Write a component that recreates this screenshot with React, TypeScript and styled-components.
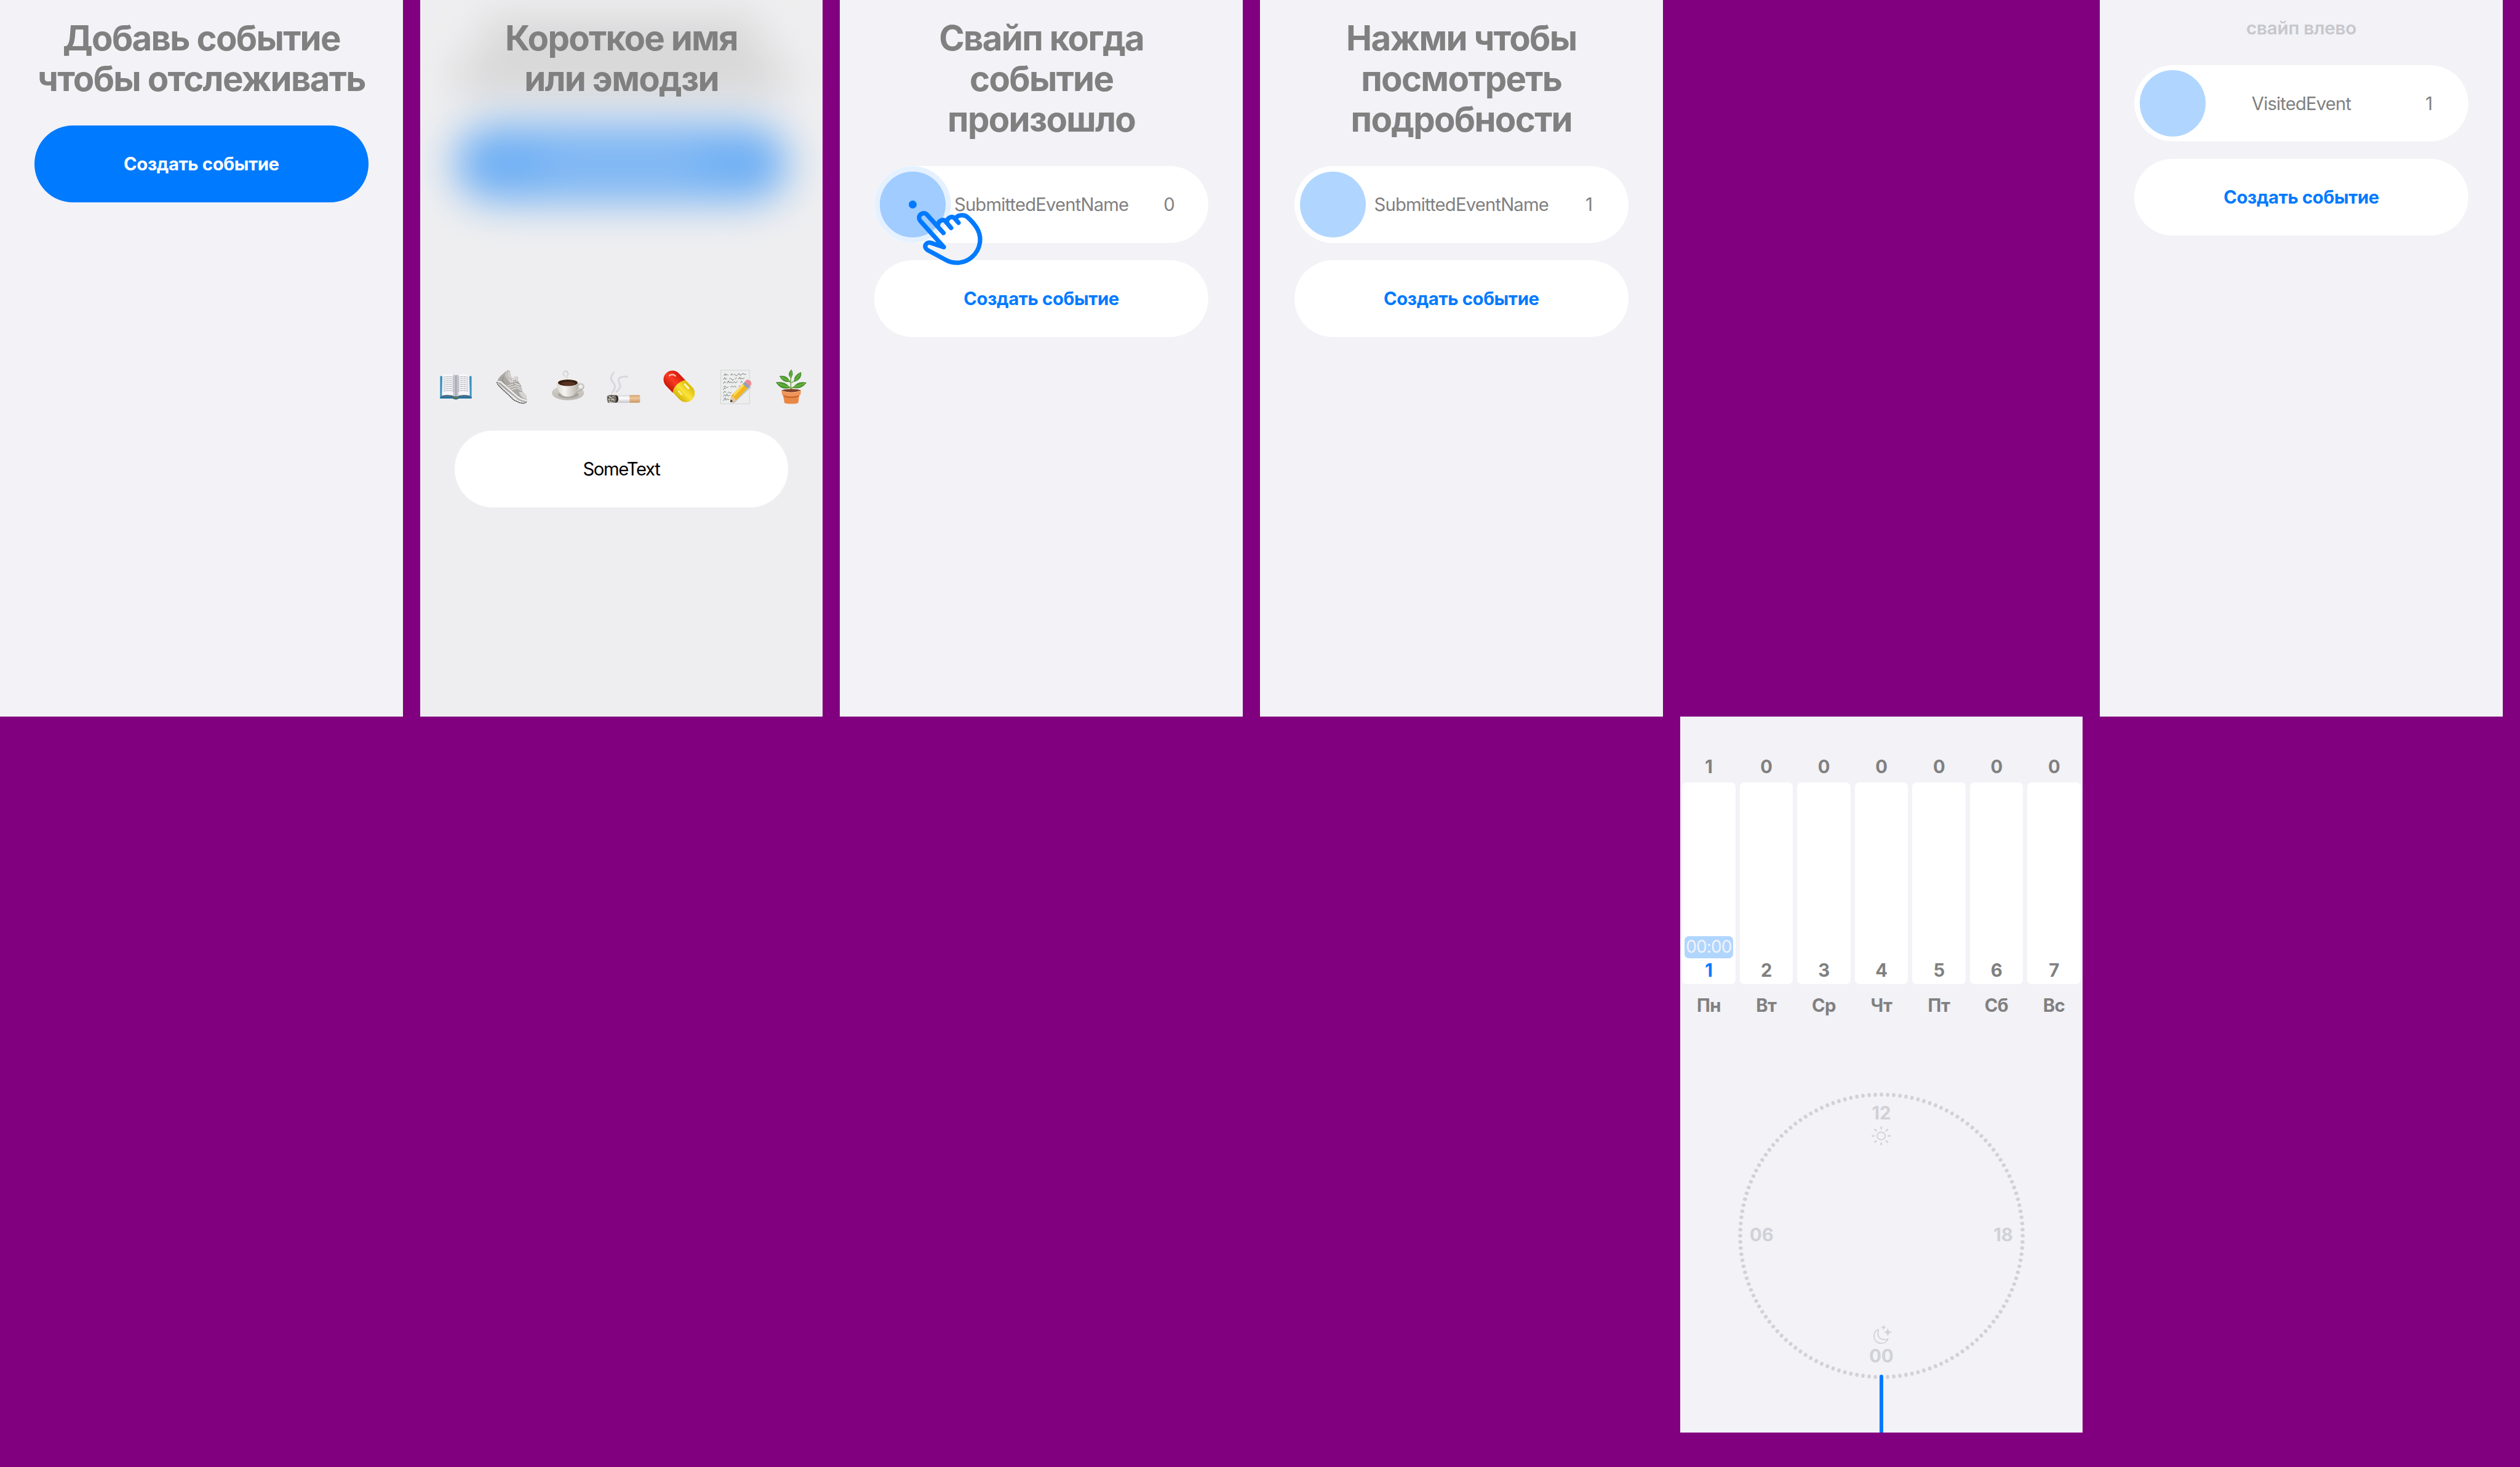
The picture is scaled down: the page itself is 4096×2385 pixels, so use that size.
import React from "react";
import styled, { createGlobalStyle } from "styled-components";

// 1rem is ten design pixels; the board is 4692 design pixels wide.
const px = (n: number) => `${n / 10}rem`;

const color = {
  board: "#800080",
  screen: "#f2f2f7",
  card: "#ffffff",
  accent: "#007aff",
  accentSoft: "#b0d6ff",
  text: "#808080",
  faint: "#d1d1d6",
  hint: "#c7c7cc",
};

const GlobalStyle = createGlobalStyle`
  html { font-size: calc(100vw / 469.2); }
  body {
    margin: 0;
    background: ${color.board};
    overflow: hidden;
    font-family: Inter, "Noto Sans", "Liberation Sans", sans-serif;
  }
  *, *::before, *::after { box-sizing: border-box; }
`;

const Board = styled.main`
  width: 100vw;
  height: 100vh;
  display: grid;
  grid-template-columns: repeat(6, ${px(750)});
  grid-template-rows: repeat(2, ${px(1334)});
  column-gap: ${px(32)};
  background: ${color.board};
`;

const Screen = styled.section<{ $row?: number; $col: number }>`
  grid-row: ${(p) => p.$row ?? 1};
  grid-column: ${(p) => p.$col};
  position: relative;
  display: flex;
  flex-direction: column;
  align-items: center;
  overflow: hidden;
  background: ${color.screen};
`;

const Heading = styled.h1`
  position: relative;
  margin: 0 0 ${px(48.5)};
  padding-top: ${px(33)};
  display: flex;
  flex-direction: column;
  align-items: center;
  font-size: ${px(64.5)};
  line-height: ${px(76)};
  font-weight: 700;
  letter-spacing: -0.03em;
  color: ${color.text};
  white-space: nowrap;
`;

const Hint = styled.p`
  margin: 0 0 ${px(49)};
  padding-top: ${px(32)};
  font-size: ${px(34)};
  line-height: ${px(40)};
  font-weight: 600;
  letter-spacing: -0.01em;
  color: ${color.hint};
`;

const CreateButton = styled.button<{ $filled?: boolean }>`
  width: ${px(622)};
  height: ${px(143)};
  flex: none;
  border: 0;
  padding: ${px(2.5)} 0 0;
  border-radius: ${px(71.5)};
  background: ${(p) => (p.$filled ? color.accent : color.card)};
  color: ${(p) => (p.$filled ? "#ffffff" : color.accent)};
  font: inherit;
  font-size: ${px(33.5)};
  line-height: ${px(40)};
  font-weight: 700;
  letter-spacing: -0.012em;
`;

const EventRow = styled.div`
  width: ${px(622)};
  height: ${px(143)};
  flex: none;
  margin-bottom: ${px(32)};
  display: grid;
  grid-template-columns: ${px(147)} minmax(0, 1fr) ${px(147)};
  align-items: center;
  justify-items: center;
  border-radius: ${px(71.5)};
  background: ${color.card};
  color: ${color.text};
  font-size: ${px(33.5)};
  line-height: ${px(40)};
  letter-spacing: -0.028em;
  white-space: nowrap;
`;

const RowText = styled.span`
  padding-top: ${px(2.5)};
`;

const Knob = styled.span<{ $pressed?: boolean }>`
  justify-self: start;
  margin-left: ${px(10)};
  width: ${px(123)};
  height: ${px(123)};
  display: grid;
  place-items: center;
  border-radius: 50%;
  background: ${(p) => (p.$pressed ? "#a0ccff" : color.accentSoft)};
  box-shadow: ${(p) => (p.$pressed ? `0 0 0 ${px(10)} #e5f1ff` : "none")};
`;

const TouchPoint = styled.span`
  width: ${px(15)};
  height: ${px(15)};
  border-radius: 50%;
  background: ${color.accent};
`;

const HandIcon = styled.svg`
  position: absolute;
  left: ${px(136)};
  top: ${px(386.67)};
  width: ${px(133.33)};
  height: ${px(110)};
`;

const Backdrop = styled.div`
  position: absolute;
  inset: 0;
  display: flex;
  flex-direction: column;
  align-items: center;
  padding-top: ${px(40)};
  filter: blur(${px(38)});
`;

const BackdropLine = styled.span<{ $w: number }>`
  width: ${(p) => px(p.$w)};
  height: ${px(55)};
  flex: none;
  margin-bottom: ${px(21)};
  background: rgba(128, 128, 128, 0.5);
`;

const BackdropButton = styled.span`
  width: ${px(622)};
  height: ${px(143)};
  flex: none;
  margin-top: ${px(41)};
  display: grid;
  place-items: center;
  border-radius: ${px(71.5)};
  background: ${color.accent};
`;

const BackdropLabel = styled.span`
  width: ${px(293)};
  height: ${px(24)};
  background: rgba(255, 255, 255, 0.4);
`;

const Material = styled.div`
  position: absolute;
  inset: 0;
  background: rgba(234, 234, 233, 0.48);
`;

const EmojiRow = styled.div`
  position: relative;
  align-self: flex-start;
  margin: ${px(455.5)} 0 ${px(49)} ${px(35.3)};
  display: flex;
  gap: ${px(39.9)};
  svg {
    display: block;
    width: ${px(64)};
    height: ${px(64)};
    overflow: visible;
  }
`;

const Field = styled.div`
  position: relative;
  width: ${px(622)};
  height: ${px(143)};
  flex: none;
  padding-top: ${px(2.5)};
  display: flex;
  align-items: center;
  justify-content: center;
  border-radius: ${px(71.5)};
  background: ${color.card};
  color: #000000;
  font-size: ${px(33.5)};
  line-height: ${px(40)};
  letter-spacing: -0.045em;
`;

const Week = styled.div`
  width: 100%;
  margin-top: ${px(75)};
  display: grid;
  grid-template-columns: repeat(7, 1fr);
  font-size: ${px(33.5)};
  line-height: ${px(40)};
  font-weight: 700;
  letter-spacing: -0.02em;
  color: ${color.text};
`;

const Day = styled.div`
  display: flex;
  flex-direction: column;
  align-items: center;
`;

const Bar = styled.div`
  width: ${px(99)};
  height: ${px(376)};
  margin: ${px(8)} 0 ${px(21)};
  padding-bottom: ${px(4.8)};
  display: flex;
  flex-direction: column;
  justify-content: flex-end;
  align-items: center;
  gap: ${px(4)};
  border-radius: ${px(8)};
  background: ${color.card};
`;

const TimeBadge = styled.span`
  width: ${px(91)};
  height: ${px(41)};
  display: flex;
  align-items: center;
  justify-content: center;
  border-radius: ${px(8)};
  background: ${color.accentSoft};
  color: ${color.screen};
  font-size: ${px(32)};
  font-weight: 400;
  letter-spacing: -0.03em;
`;

const DayNumber = styled.span<{ $today?: boolean }>`
  color: ${(p) => (p.$today ? color.accent : color.text)};
`;

const Dial = styled.div`
  position: relative;
  width: ${px(534)};
  height: ${px(534)};
  flex: none;
  margin-top: ${px(139.9)};
  padding: ${px(20)} ${px(22)} ${px(21)};
  display: grid;
  grid-template-columns: ${px(60)} 1fr ${px(60)};
  grid-template-rows: 1fr ${px(40)} 1fr;
  color: ${color.faint};
  font-size: ${px(33.5)};
  line-height: ${px(40)};
  font-weight: 700;
`;

const DialDots = styled.svg`
  position: absolute;
  inset: 0;
  width: 100%;
  height: 100%;
`;

const DialMark = styled.div<{ $area: string; $align?: string; $justify?: string }>`
  grid-area: ${(p) => p.$area};
  display: flex;
  flex-direction: column;
  align-items: ${(p) => p.$align ?? "center"};
  justify-content: ${(p) => p.$justify ?? "flex-start"};
`;

const SunIcon = styled.svg`
  display: block;
  width: ${px(36)};
  height: ${px(36)};
  margin-top: ${px(3)};
`;

const MoonIcon = styled.svg`
  display: block;
  width: ${px(36.67)};
  height: ${px(36.67)};
  margin: 0 0 ${px(2.5)} ${px(4)};
`;

const Needle = styled.div`
  position: relative;
  flex: 1;
  width: ${px(6)};
  margin-top: ${px(-8)};
  border-radius: ${px(3)} ${px(3)} 0 0;
  background: ${color.accent};
`;

const Book = () => (
  <svg viewBox="0 0 192 192">
    <path d="M8 36H184V161H114Q96 170 80 161H8Z" fill="#3b92bd" />
    <path d="M8 152H184V161H112Q96 170 82 161H8Z" fill="#1f6f9c" />
    <path d="M17 148Q60 136 96 153Q132 136 177 148L174 152Q132 144 96 157Q60 144 20 152Z" fill="#5b5b5e" />
    <path d="M21 30Q60 18 95 31V150Q60 134 18 145Z" fill="#f6f6fa" />
    <path d="M171 30Q132 18 97 31V150Q132 134 174 145Z" fill="#f6f6fa" />
    <path d="M80 27L95 31V150L80 144Z" fill="#c9c9d2" />
    <path d="M112 27L97 31V150L112 144Z" fill="#c9c9d2" />
    <path d="M95 30H98V153H95Z" fill="#6d6d72" />
    {[0, 1, 2, 3, 4, 5, 6, 7].map((i) => (
      <g key={i} stroke="#8e8e98" strokeWidth="3" strokeDasharray="9 2 5 2" fill="none">
        <path d={`M27 ${43 + i * 11}Q58 ${35 + i * 11} 86 ${44 + i * 11}`} />
        <path d={`M105 ${44 + i * 11}Q134 ${35 + i * 11} 165 ${43 + i * 11}`} />
      </g>
    ))}
    <ellipse cx="95" cy="158" rx="15" ry="8" fill="#245d70" />
    <path d="M82 154Q95 164 109 154" stroke="#a79b2c" strokeWidth="4" fill="none" />
  </svg>
);

const Shoe = () => (
  <svg viewBox="0 0 192 192">
    <path d="M12 70L21 84L44 108L76 136L108 168L140 183L176 186L178 177L140 170L18 64Z" fill="#e9e9ea" />
    <path d="M12 70L20 86L44 110L76 139L106 169L140 185L160 188L178 182" fill="none" stroke="#2b2b2b" strokeWidth="5" strokeDasharray="7 3" />
    <path d="M15 64Q23 42 45 24L70 4Q79 3 85 9Q86 27 93 42Q104 56 110 42Q124 33 129 42L130 63L146 85L156 124Q179 141 179 158L180 179Q159 184 133 170L57 108L20 76Z" fill="#aba7a4" />
    <path d="M17 66L35 69L131 154Q154 170 179 172" fill="none" stroke="#f1f1f2" strokeWidth="8" />
    <path d="M70 6Q58 17 60 35L87 75L110 69L100 50Q85 40 84 10Z" fill="#d2d0cf" />
    <path d="M73 10Q64 23 72 42L96 56" fill="none" stroke="#a19d9b" strokeWidth="3" />
    <path d="M100 47Q108 34 124 36L130 64L99 70Z" fill="#d9d8d8" />
    <path d="M134 125Q166 119 178 150V166Q153 165 134 125Z" fill="#d5d3d2" />
    <path d="M48 38L42 60L57 79" fill="none" stroke="#8f8a87" strokeWidth="4" />
    <path d="M72 91L103 81M79 102L121 90M91 112L124 103" stroke="#d7d4d2" strokeWidth="6" />
    <path d="M112 77L142 87M119 90L149 102M127 103L152 116" stroke="#f4f4f5" strokeWidth="4" />
    <circle cx="108" cy="61" r="2.5" fill="#5c5957" />
    <circle cx="117" cy="59" r="2.5" fill="#5c5957" />
  </svg>
);

const Cup = () => (
  <svg viewBox="0 0 192 192">
    <defs>
      <linearGradient id="cupBody" x1="0" x2="1">
        <stop offset="0" stopColor="#d9d6d0" />
        <stop offset="0.35" stopColor="#f6f4f1" />
        <stop offset="1" stopColor="#b5b0a8" />
      </linearGradient>
      <linearGradient id="saucer" x1="0" x2="0" y1="0" y2="1">
        <stop offset="0" stopColor="#d3d1cc" />
        <stop offset="1" stopColor="#bdb9b3" />
      </linearGradient>
    </defs>
    <path d="M78 38Q66 24 76 10Q84 2 88 12Q98 4 94 20Q106 24 92 32Q84 36 96 50" fill="none" stroke="#c3c3c7" strokeWidth="5" opacity="0.75" />
    <ellipse cx="97" cy="130" rx="90" ry="41" fill="url(#saucer)" />
    <ellipse cx="99" cy="140" rx="58" ry="20" fill="#a9a49d" />
    <path d="M152 88Q164 72 179 83Q191 96 174 110Q160 122 142 124" fill="none" stroke="#b9b4ac" strokeWidth="8" />
    <path d="M152 86Q164 70 178 81Q189 94 172 107" fill="none" stroke="#e9e7e3" strokeWidth="3" />
    <path d="M34 70Q36 126 66 144Q96 158 126 144Q156 126 158 70Z" fill="url(#cupBody)" />
    <ellipse cx="96" cy="70" rx="62" ry="23" fill="#f1efec" />
    <ellipse cx="96" cy="73" rx="55" ry="18" fill="#3a2014" />
    <ellipse cx="100" cy="78" rx="38" ry="10" fill="#5a3420" />
  </svg>
);

const Cigarette = () => (
  <svg viewBox="0 0 192 192">
    <defs>
      <linearGradient id="paper" x1="0" x2="0" y1="0" y2="1">
        <stop offset="0" stopColor="#d8d8dc" />
        <stop offset="0.4" stopColor="#ffffff" />
        <stop offset="1" stopColor="#c4c4ca" />
      </linearGradient>
      <linearGradient id="tip" x1="0" x2="0" y1="0" y2="1">
        <stop offset="0" stopColor="#d3a274" />
        <stop offset="0.4" stopColor="#f0c79b" />
        <stop offset="1" stopColor="#c69363" />
      </linearGradient>
    </defs>
    <g fill="none" strokeLinecap="round" stroke="#d8d8dc">
      <path d="M40 16C16 42 24 58 40 76C54 96 44 114 30 128" strokeWidth="10" />
      <path d="M114 40C76 34 60 48 70 72C84 96 68 112 54 124" strokeWidth="10" />
    </g>
    <rect x="50" y="142" width="80" height="43" fill="url(#paper)" />
    <path d="M128 142H180Q187 142 187 150V177Q187 185 180 185H128Z" fill="url(#tip)" />
    <path d="M48 142Q66 142 66 164Q66 185 46 185Z" fill="#3a2d26" />
    <path d="M4 146Q20 136 48 142Q62 164 46 185L24 183L8 186Q-2 166 4 146Z" fill="#77736c" />
    <path d="M14 150L24 158L38 150M10 164L22 172L34 164L44 172M14 178L26 180" stroke="#d4d0c8" strokeWidth="5" fill="none" />
    <path d="M6 154L12 160M28 148L32 156M20 176L24 168" stroke="#2f2c29" strokeWidth="4" />
  </svg>
);

const Pill = () => (
  <svg viewBox="0 0 192 192">
    <defs>
      <linearGradient id="pillRed" gradientUnits="userSpaceOnUse" x1="20" y1="96" x2="96" y2="20">
        <stop offset="0" stopColor="#c01308" />
        <stop offset="0.5" stopColor="#fb3a22" />
        <stop offset="1" stopColor="#d21a0c" />
      </linearGradient>
      <linearGradient id="pillYellow" gradientUnits="userSpaceOnUse" x1="92" y1="168" x2="168" y2="92">
        <stop offset="0" stopColor="#cfae00" />
        <stop offset="0.5" stopColor="#fbe33a" />
        <stop offset="1" stopColor="#d8b800" />
      </linearGradient>
    </defs>
    <path d="M95 94L60 129L22 89A49 49 0 0 1 94 21L132 60Z" fill="url(#pillRed)" />
    <path d="M60 126Q70 76 130 58L168 96A49 49 0 0 1 98 167Z" fill="url(#pillYellow)" />
    <path d="M42 33Q58 20 74 34" fill="none" stroke="#ffb3a6" strokeWidth="9" strokeLinecap="round" />
    <path d="M128 82L148 104" stroke="#fffbd0" strokeWidth="10" strokeLinecap="round" />
    <path d="M93 120L110 139" stroke="#fff29a" strokeWidth="8" strokeLinecap="round" />
  </svg>
);

const Memo = () => (
  <svg viewBox="0 0 192 192">
    <rect x="16" y="3" width="160" height="188" fill="#eceded" stroke="#cfd0d0" strokeWidth="3" />
    <g fill="none" stroke="#6c6c6e" strokeWidth="3">
      <path d="M34 34l6-12 4 10 8-6 6 6M70 32l8-10 2 10M88 30q6-10 10 0t12-2 10-2 10 2 14-4 12 2" />
      <path d="M30 56l8-12 4 10 8-4M64 54q6-12 12 0t14-2M102 44l-4 10M112 54l10-12 2 10 10-4 6 4 8-8" />
      <path d="M30 78l8-12 4 8M52 76l6-14 6 12 8-6 8 6 10-6 10 6 8-10M126 74l6-10 4 8" />
      <path d="M30 98q8-12 14-2t14-2M70 100l8-10 8 8 8-8 8 10M116 94l8-6" />
      <path d="M30 112l8-12 4 8M30 132l8-12 6 8M54 130q6-10 10-2t12-2" />
      <path d="M28 150l10-10 6 8 6-12 6 12 12-6M30 174l10-18 4 14 8-6 10 4" />
    </g>
    <path d="M74 186L176 92L186 96L92 186Z" fill="#77777a" opacity="0.35" />
    <path d="M69 183L73 147L150 68L176 92L100 172Z" fill="#f2b61c" />
    <path d="M86 135L150 68L158 76L90 150Z" fill="#ffd75c" />
    <path d="M69 183L73 147L86 150L92 160L100 172Z" fill="#e9c79c" />
    <path d="M69 183L71 166L83 176Z" fill="#2f2f33" />
    <path d="M138 80L152 66L180 91L165 104Z" fill="#8fa2bd" />
    <path d="M150 68L158 58Q170 52 182 64Q190 74 186 84L178 93Z" fill="#ea8c97" />
  </svg>
);

const Plant = () => (
  <svg viewBox="0 0 192 192">
    <path d="M97 30Q90 66 97 118M98 74L115 60M95 74L84 62M97 112Q98 98 118 94M97 112Q94 98 76 94" fill="none" stroke="#6fa03c" strokeWidth="5" />
    <g fill="#4f9e2f" stroke="#2f7420" strokeWidth="2">
      <path d="M97 0Q112 24 94 46Q72 26 97 0Z" />
      <path d="M151 15Q156 54 115 67Q108 32 151 15Z" />
      <path d="M32 36Q76 30 88 67Q50 74 32 36Z" />
      <path d="M181 73Q152 112 108 101Q130 62 181 73Z" />
      <path d="M12 71Q64 64 88 101Q40 116 12 71Z" />
    </g>
    <g fill="none" stroke="#8cc455" strokeWidth="3">
      <path d="M97 8L94 42M146 22L118 62M40 42L84 64M172 76L114 98M22 76L80 98" />
    </g>
    <path d="M50 134H142L136 184Q134 191 96 191Q60 191 58 184Z" fill="#e98845" />
    <path d="M52 150Q96 166 140 150L142 138H50Z" fill="#c4652c" />
    <path d="M42 116Q96 100 151 116L148 142Q96 158 46 142Z" fill="#f0955a" />
    <ellipse cx="96" cy="117" rx="53" ry="9" fill="#7a4128" />
    <path d="M44 118Q96 138 150 118" fill="none" stroke="#f9ae7b" strokeWidth="4" />
  </svg>
);

const Hand = () => (
  <HandIcon viewBox="300 290 400 330">
    <g fill="none" stroke={color.accent} strokeWidth="25" strokeLinecap="round" strokeLinejoin="round">
      <path d="M470 430L378 328A25 25 0 0 0 341 363L472 509L402 486C372 476 356 508 380 525L480 579C530 608 592 600 630 564C676 523 690 456 655 400C642 380 618 354 602 340C584 327 558 328 540 344" />
      <path d="M439 388C440 362 468 348 484 368L513 402" />
      <path d="M489 366C494 343 518 332 534 350L554 373" />
    </g>
  </HandIcon>
);

const DOTS = 144;

const DialRing = () => (
  <DialDots viewBox="-267 -267 534 534">
    {Array.from({ length: DOTS }, (_, i) => i)
      .filter((i) => i !== DOTS / 2)
      .map((i) => (
        <line
          key={i}
          x1="0"
          y1="-263.7"
          x2="0"
          y2="-262.3"
          stroke={color.faint}
          strokeWidth="6.2"
          strokeLinecap="round"
          transform={`rotate(${(i * 360) / DOTS})`}
        />
      ))}
  </DialDots>
);

const Sun = () => (
  <SunIcon viewBox="-18 -18 36 36">
    <g fill="none" stroke={color.faint}>
      <circle r="7.3" strokeWidth="2.1" />
      {[0, 45, 90, 135, 180, 225, 270, 315].map((a) => (
        <path key={a} d="M0 -16.6V-13.4" strokeWidth="2.8" strokeLinecap="round" transform={`rotate(${a})`} />
      ))}
    </g>
  </SunIcon>
);

const Moon = () => (
  <MoonIcon viewBox="35 35 110 110">
    <path
      d="M67 60C51 66 42 80 42 98C42 122 60 138 82 138C100 138 114 129 120 113C112 117 104 118 96 117C76 117 62 98 64 80C64 72 66 65 67 60Z"
      fill="none"
      stroke={color.faint}
      strokeWidth="6"
      strokeLinejoin="round"
    />
    <path d="M95 36Q96 48 108 49Q96 50 95 62Q94 50 82 49Q94 48 95 36Z" fill={color.faint} stroke={color.faint} strokeWidth="2" />
    <path d="M119 56Q121 74 139 76Q121 78 119 96Q117 78 99 76Q117 74 119 56Z" fill={color.faint} stroke={color.faint} strokeWidth="3" />
  </MoonIcon>
);

const week = [
  { name: "Пн", date: 1, count: 1, time: "00:00" },
  { name: "Вт", date: 2, count: 0 },
  { name: "Ср", date: 3, count: 0 },
  { name: "Чт", date: 4, count: 0 },
  { name: "Пт", date: 5, count: 0 },
  { name: "Сб", date: 6, count: 0 },
  { name: "Вс", date: 7, count: 0 },
];

const Title = ({ lines }: { lines: string[] }) => (
  <Heading>
    {lines.map((line) => (
      <span key={line}>{line}</span>
    ))}
  </Heading>
);

const Event = ({ name, count, pressed }: { name: string; count: number; pressed?: boolean }) => (
  <EventRow>
    <Knob $pressed={pressed}>{pressed && <TouchPoint />}</Knob>
    <RowText>{name}</RowText>
    <RowText>{count}</RowText>
  </EventRow>
);

export default function App() {
  return (
    <>
      <GlobalStyle />
      <Board>
        <Screen $col={1}>
          <Title lines={["Добавь событие", "чтобы отслеживать"]} />
          <CreateButton $filled>Создать событие</CreateButton>
        </Screen>

        <Screen $col={2}>
          <Backdrop>
            <BackdropLine $w={512} />
            <BackdropLine $w={612} />
            <BackdropButton>
              <BackdropLabel />
            </BackdropButton>
          </Backdrop>
          <Material />
          <Title lines={["Короткое имя", "или эмодзи"]} />
          <EmojiRow>
            <Book />
            <Shoe />
            <Cup />
            <Cigarette />
            <Pill />
            <Memo />
            <Plant />
          </EmojiRow>
          <Field>SomeText</Field>
        </Screen>

        <Screen $col={3}>
          <Title lines={["Свайп когда", "событие", "произошло"]} />
          <Event name="SubmittedEventName" count={0} pressed />
          <CreateButton>Создать событие</CreateButton>
          <Hand />
        </Screen>

        <Screen $col={4}>
          <Title lines={["Нажми чтобы", "посмотреть", "подробности"]} />
          <Event name="SubmittedEventName" count={1} />
          <CreateButton>Создать событие</CreateButton>
        </Screen>

        <Screen $col={5} $row={2}>
          <Week>
            {week.map((day) => (
              <Day key={day.name}>
                <span>{day.count}</span>
                <Bar>
                  {day.time && <TimeBadge>{day.time}</TimeBadge>}
                  <DayNumber $today={day.date === 1}>{day.date}</DayNumber>
                </Bar>
                <span>{day.name}</span>
              </Day>
            ))}
          </Week>
          <Dial>
            <DialRing />
            <DialMark $area="1 / 2">
              <span>12</span>
              <Sun />
            </DialMark>
            <DialMark $area="2 / 1" $align="flex-start">
              <span>06</span>
            </DialMark>
            <DialMark $area="2 / 3" $align="flex-end">
              <span>18</span>
            </DialMark>
            <DialMark $area="3 / 2" $justify="flex-end">
              <Moon />
              <span>00</span>
            </DialMark>
          </Dial>
          <Needle />
        </Screen>

        <Screen $col={6}>
          <Hint>свайп влево</Hint>
          <Event name="VisitedEvent" count={1} />
          <CreateButton>Создать событие</CreateButton>
        </Screen>
      </Board>
    </>
  );
}
